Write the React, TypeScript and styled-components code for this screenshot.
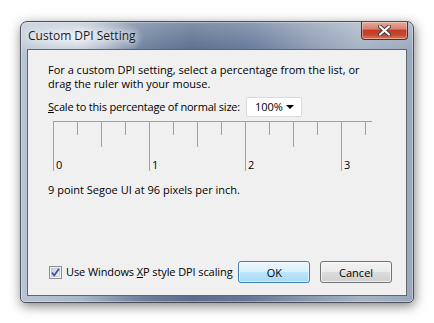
import React from "react"
import styled, { createGlobalStyle } from "styled-components"

const Global = createGlobalStyle`
  html, body {
    margin: 0;
    padding: 0;
    background: #ffffff;
  }
  body {
    width: 434px;
    height: 323px;
    overflow: hidden;
    font-family: "Open Sans", "Noto Sans", sans-serif;
  }
`

const Page = styled.div`
  padding: 21px 0 0 20px;
`

const Window = styled.div`
  box-sizing: border-box;
  width: 394px;
  height: 282px;
  border: 1px solid #4a4f58;
  border-radius: 7px 7px 5px 5px;
  padding: 0 6px 6px 6px;
  display: flex;
  flex-direction: column;
  background:
    radial-gradient(ellipse 70px 22px at 55px 16px, rgba(255, 255, 255, 0.75), rgba(255, 255, 255, 0) 100%),
    linear-gradient(to bottom, rgba(255, 255, 255, 0.25), rgba(255, 255, 255, 0) 30px),
    linear-gradient(
      to right,
      #b8c5d6 0px,
      #a9b7ca 60px,
      #6d809e 120px,
      #5a6d8c 170px,
      #66799a 230px,
      #8c9bb2 290px,
      #a6b3c5 340px,
      #9aa8bc 394px
    );
  box-shadow:
    0 0 0 1px rgba(255, 255, 255, 0.35) inset,
    1px 3px 12px rgba(0, 0, 0, 0.5);
`

const TitleBar = styled.div`
  height: 27px;
  display: flex;
  justify-content: space-between;
  align-items: flex-start;
`

const Title = styled.div`
  padding: 5px 0 0 1px;
  font-size: 12px;
  color: #1c1c1c;
  text-shadow: 0 0 6px rgba(255, 255, 255, 0.9), 0 0 10px rgba(255, 255, 255, 0.8);
`

const CloseButton = styled.div`
  width: 47px;
  height: 18px;
  margin-right: -1px;
  box-sizing: border-box;
  border: 1px solid #5b2a24;
  border-top: none;
  border-radius: 0 0 4px 4px;
  background: linear-gradient(
    to bottom,
    #e5a899 0%,
    #d88371 40%,
    #c23d27 50%,
    #c6452d 75%,
    #da7a5c 100%
  );
  box-shadow: inset 0 0 0 1px rgba(255, 255, 255, 0.35);
  display: flex;
  align-items: center;
  justify-content: center;
`

const Client = styled.div`
  flex: 1;
  background: #f0f0f0;
  border: 1px solid #5d6673;
  padding: 13px 14px 12px 20px;
  display: flex;
  flex-direction: column;
  font-size: 11px;
  line-height: 14px;
  color: #000;
`

const Intro = styled.p`
  margin: 0;
`

const ScaleRow = styled.div`
  margin-top: 6px;
  display: flex;
  align-items: center;
  height: 20px;
`

const ScaleLabel = styled.label`
  width: 198px;
  flex-shrink: 0;
  white-space: nowrap;
  letter-spacing: -0.2px;
`

const Dropdown = styled.div`
  box-sizing: border-box;
  width: 56px;
  height: 20px;
  background: #ffffff;
  border: 1px solid #dadada;
  border-radius: 2px;
  display: flex;
  align-items: center;
  justify-content: space-between;
  padding: 0 7px 0 8px;
`

const Arrow = styled.span`
  width: 0;
  height: 0;
  border-left: 4px solid transparent;
  border-right: 4px solid transparent;
  border-top: 4px solid #000;
`

const Ruler = styled.svg`
  display: block;
  margin: 4px 0 0 5px;
  overflow: visible;
`

const Info = styled.div`
  margin-top: 11px;
`

const Footer = styled.div`
  margin-top: auto;
  display: flex;
  align-items: center;
`

const CheckLabel = styled.label`
  display: flex;
  align-items: center;
  gap: 4px;
  margin-left: 1px;
  width: 190px;
  white-space: nowrap;
  letter-spacing: -0.1px;
`

const Button = styled.button<{ $default?: boolean }>`
  box-sizing: border-box;
  width: 72px;
  height: 22px;
  margin-left: ${(p) => (p.$default ? "0" : "10px")};
  font-family: inherit;
  font-size: 11px;
  color: #000;
  border-radius: 3px;
  border: 1px solid ${(p) => (p.$default ? "#3c7fb1" : "#707070")};
  background: ${(p) =>
    p.$default
      ? "linear-gradient(to bottom, #eaf6fd 0%, #d9f0fc 50%, #bee6fd 51%, #a7d9f5 100%)"
      : "linear-gradient(to bottom, #f2f2f2 0%, #ebebeb 50%, #dddddd 51%, #cfcfcf 100%)"};
  box-shadow: inset 0 0 0 1px ${(p) => (p.$default ? "rgba(255,255,255,0.6)" : "rgba(255,255,255,0.7)")};
  padding: 0;
`

const ticks = Array.from({ length: 14 }, (_, i) => i * 24)

function tickLength(x: number) {
  if (x % 96 === 0) return 50
  if (x % 48 === 0) return 26
  return 14
}

function RulerDrawing() {
  return (
    <Ruler width={320} height={51} viewBox="0 0 320 51">
      <line x1={0} y1={0.5} x2={319} y2={0.5} stroke="#a0a0a0" />
      {ticks.map((x) => (
        <line key={x} x1={x + 0.5} y1={0} x2={x + 0.5} y2={tickLength(x)} stroke="#a0a0a0" />
      ))}
      {[0, 1, 2, 3].map((n) => (
        <text key={n} x={n * 96 + 3} y={48} fontSize={11} fill="#000" fontFamily="Open Sans, sans-serif">
          {n}
        </text>
      ))}
    </Ruler>
  )
}

function CheckBox() {
  return (
    <svg width="13" height="13" viewBox="0 0 13 13">
      <defs>
        <linearGradient id="cbg" x1="0" y1="0" x2="1" y2="1">
          <stop offset="0" stopColor="#cbcfd5" />
          <stop offset="1" stopColor="#f6f6f6" />
        </linearGradient>
      </defs>
      <rect x="0.5" y="0.5" width="12" height="12" fill="#f4f4f4" stroke="#8e8f8f" />
      <rect x="2.5" y="2.5" width="8" height="8" fill="url(#cbg)" stroke="#b8bcc2" strokeWidth="0.6" />
      <path d="M3 6.5 L5.2 9.5 L10 2.8" fill="none" stroke="#3a56a8" strokeWidth="1.8" strokeLinejoin="round" />
    </svg>
  )
}

function CloseGlyph() {
  return (
    <svg width="13" height="11" viewBox="0 0 13 11">
      <path
        d="M2 1.5 L11 9.5 M11 1.5 L2 9.5"
        stroke="#3b3b3b"
        strokeWidth="4"
        strokeLinecap="round"
      />
      <path d="M2 1.5 L11 9.5 M11 1.5 L2 9.5" stroke="#ffffff" strokeWidth="2.2" strokeLinecap="round" />
    </svg>
  )
}

export default function App() {
  return (
    <>
      <Global />
      <Page>
        <Window>
          <TitleBar>
            <Title>Custom DPI Setting</Title>
            <CloseButton>
              <CloseGlyph />
            </CloseButton>
          </TitleBar>
          <Client>
            <Intro>
              For a custom DPI setting, select a percentage from the list, or
              <br />
              drag the ruler with your mouse.
            </Intro>
            <ScaleRow>
              <ScaleLabel>
                <u>S</u>cale to this percentage of normal size:
              </ScaleLabel>
              <Dropdown>
                <span>100%</span>
                <Arrow />
              </Dropdown>
            </ScaleRow>
            <RulerDrawing />
            <Info>9 point Segoe UI at 96 pixels per inch.</Info>
            <Footer>
              <CheckLabel>
                <CheckBox />
                <span>
                  Use Windows <u>X</u>P style DPI scaling
                </span>
              </CheckLabel>
              <Button $default>OK</Button>
              <Button>Cancel</Button>
            </Footer>
          </Client>
        </Window>
      </Page>
    </>
  )
}
